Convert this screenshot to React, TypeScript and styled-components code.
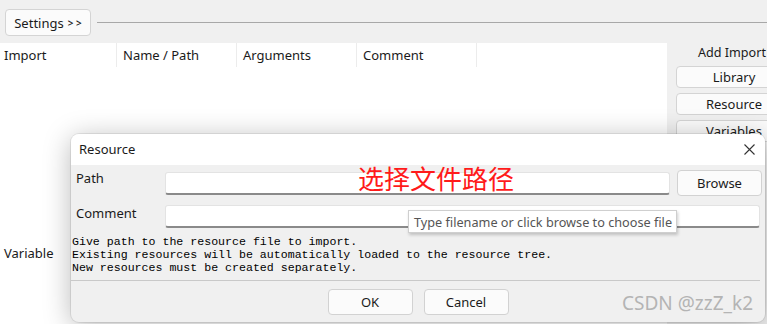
import React from 'react';
import styled, { createGlobalStyle } from 'styled-components';

const GlobalStyle = createGlobalStyle`
  body {
    margin: 0;
    background: #f0f0f0;
    font-family: 'Noto Sans', 'Noto Sans CJK SC', sans-serif;
    font-size: 13px;
    color: #1a1a1a;
  }
`;

const columns = [
  { title: 'Import', width: 117 },
  { title: 'Name / Path', width: 120 },
  { title: 'Arguments', width: 120 },
  { title: 'Comment', width: 120 },
];
const sideButtons = ['Library', 'Resource', 'Variables'];
const helpLines = [
  'Give path to the resource file to import.',
  'Existing resources will be automatically loaded to the resource tree.',
  'New resources must be created separately.',
];

const App = () => {
  return (
    <>
      <GlobalStyle />
      <Window>
        <TopBar>
          <SettingsButton>
            Settings <Arrows>&gt; &gt;</Arrows>
          </SettingsButton>
          <Rule />
        </TopBar>
        <Content>
          <Table>
            <HeaderRow>
              {columns.map((c, i) => (
                <HeaderCell key={c.title} $width={c.width} $first={i === 0}>
                  {c.title}
                </HeaderCell>
              ))}
            </HeaderRow>
            <VariableLabel>Variable</VariableLabel>
          </Table>
          <SidePanel>
            <SideTitle>Add Import</SideTitle>
            {sideButtons.map((b) => (
              <SideButton key={b}>{b}</SideButton>
            ))}
          </SidePanel>
        </Content>

        <Dialog>
          <TitleBar>
            <DialogTitle>Resource</DialogTitle>
            <CloseButton>
              <svg width="11" height="11" viewBox="0 0 11 11">
                <path d="M0.5 0.5 L10.5 10.5 M10.5 0.5 L0.5 10.5" stroke="#333" strokeWidth="1.1" />
              </svg>
            </CloseButton>
          </TitleBar>
          <DialogBody>
            <FieldRow>
              <FieldLabel>Path</FieldLabel>
              <TextInput />
              <DialogButton>Browse</DialogButton>
            </FieldRow>
            <FieldRow $top={9}>
              <FieldLabel>Comment</FieldLabel>
              <TextInput $right={2} />
            </FieldRow>
            <HelpText>
              {helpLines.map((l) => (
                <div key={l}>{l}</div>
              ))}
            </HelpText>
            <Separator />
            <Footer>
              <DialogButton>OK</DialogButton>
              <DialogButton>Cancel</DialogButton>
            </Footer>
          </DialogBody>
          <Watermark>CSDN @zzZ_k2</Watermark>
        </Dialog>

        <Annotation>选择文件路径</Annotation>
        <Tooltip>Type filename or click browse to choose file</Tooltip>
      </Window>
    </>
  );
};

export default App;

const Window = styled.div`
  position: relative;
  width: 767px;
  height: 324px;
  overflow: hidden;
  display: flex;
  flex-direction: column;
`;

const TopBar = styled.div`
  height: 43px;
  box-sizing: border-box;
  padding: 9px 0 0 5px;
  display: flex;
  align-items: flex-start;
  gap: 6px;
`;

const SettingsButton = styled.div`
  box-sizing: border-box;
  width: 86px;
  height: 27px;
  border: 1px solid #d4d4d4;
  border-radius: 4px;
  background: #fbfbfb;
  display: flex;
  align-items: center;
  justify-content: center;
  gap: 4px;
  font-size: 13px;
`;

const Arrows = styled.span`
  font-size: 10px;
  font-weight: 600;
`;

const Rule = styled.div`
  flex: 1;
  height: 1px;
  margin-top: 13px;
  background: #a8a8a8;
`;

const Content = styled.div`
  flex: 1;
  display: flex;
`;

const Table = styled.div`
  flex: 0 0 667px;
  background: #ffffff;
`;

const HeaderRow = styled.div`
  display: flex;
  height: 24px;
`;

const HeaderCell = styled.div<{ $width: number; $first?: boolean }>`
  box-sizing: border-box;
  width: ${(p) => p.$width}px;
  padding-left: ${(p) => (p.$first ? 4 : 6)}px;
  border-right: 1px solid #ececec;
  display: flex;
  align-items: center;
  font-size: 13px;
`;

const VariableLabel = styled.div`
  margin: 177px 0 0 4px;
  font-size: 13px;
`;

const SidePanel = styled.div`
  flex: 0 0 auto;
  display: flex;
  flex-direction: column;
  padding: 2px 0 0 9px;
  gap: 5px;
`;

const SideTitle = styled.div`
  padding-left: 22px;
  height: 16px;
  line-height: 16px;
  white-space: nowrap;
  font-size: 12.6px;
`;

const SideButton = styled.div`
  box-sizing: border-box;
  width: 116px;
  height: 22px;
  border: 1px solid #d4d4d4;
  border-radius: 4px;
  background: #fbfbfb;
  display: flex;
  align-items: center;
  justify-content: center;
  font-size: 13px;
`;

const Dialog = styled.div`
  position: absolute;
  left: 71px;
  top: 134px;
  width: 694px;
  height: 188px;
  border-radius: 8px;
  overflow: hidden;
  background: #f0f0f0;
  box-shadow: 0 4px 28px rgba(0, 0, 0, 0.28), 0 0 0 1px rgba(0, 0, 0, 0.08);
  display: flex;
  flex-direction: column;
`;

const TitleBar = styled.div`
  height: 31px;
  background: #ffffff;
  display: flex;
  align-items: center;
  justify-content: space-between;
  padding: 0 10px 0 8px;
`;

const DialogTitle = styled.div`
  font-size: 13px;
  margin-top: -1px;
`;

const CloseButton = styled.div`
  display: flex;
  align-items: center;
`;

const DialogBody = styled.div`
  flex: 1;
  display: flex;
  flex-direction: column;
  padding-top: 5px;
`;

const FieldRow = styled.div<{ $top?: number }>`
  display: flex;
  align-items: center;
  margin-top: ${(p) => p.$top ?? 0}px;
  padding-right: 3px;
`;

const FieldLabel = styled.div`
  width: 94px;
  padding-left: 5px;
  box-sizing: border-box;
  align-self: flex-start;
  margin-top: -1px;
  font-size: 13px;
`;

const TextInput = styled.div<{ $right?: number }>`
  flex: 1;
  box-sizing: border-box;
  height: 23px;
  margin-right: ${(p) => (p.$right !== undefined ? p.$right : 7)}px;
  background: #ffffff;
  border: 1px solid #e3e3e3;
  border-bottom: 2px solid #8a8a8a;
  border-radius: 3px;
`;

const DialogButton = styled.div`
  box-sizing: border-box;
  width: 85px;
  height: 26px;
  border: 1px solid #d2d2d2;
  border-radius: 4px;
  background: #fbfbfb;
  display: flex;
  align-items: center;
  justify-content: center;
  font-size: 13px;
`;

const HelpText = styled.div`
  margin-top: 7px;
  padding-left: 1px;
  font-family: 'Liberation Mono', monospace;
  font-size: 11.6px;
  line-height: 13px;
  color: #000;
`;

const Separator = styled.div`
  height: 1px;
  margin: 6px 5px 0 0;
  background: #c9c9c9;
`;

const Footer = styled.div`
  display: flex;
  justify-content: center;
  gap: 11px;
  padding-top: 8px;
`;

const Watermark = styled.div`
  position: absolute;
  right: 12px;
  bottom: 6px;
  font-family: 'Noto Sans', sans-serif;
  font-size: 19px;
  color: #b4b4b4;
`;

const Annotation = styled.div`
  position: absolute;
  left: 358px;
  top: 162px;
  font-family: 'Noto Sans CJK SC', sans-serif;
  font-size: 26px;
  line-height: 32px;
  color: #ff1a1a;
`;

const Tooltip = styled.div`
  position: absolute;
  left: 408px;
  top: 210px;
  box-sizing: border-box;
  width: 269px;
  height: 23px;
  padding-left: 5px;
  background: #ffffff;
  border: 1px solid #cfcfcf;
  box-shadow: 1px 2px 3px rgba(0, 0, 0, 0.2);
  display: flex;
  align-items: center;
  white-space: nowrap;
  font-size: 12.7px;
  color: #555555;
`;
